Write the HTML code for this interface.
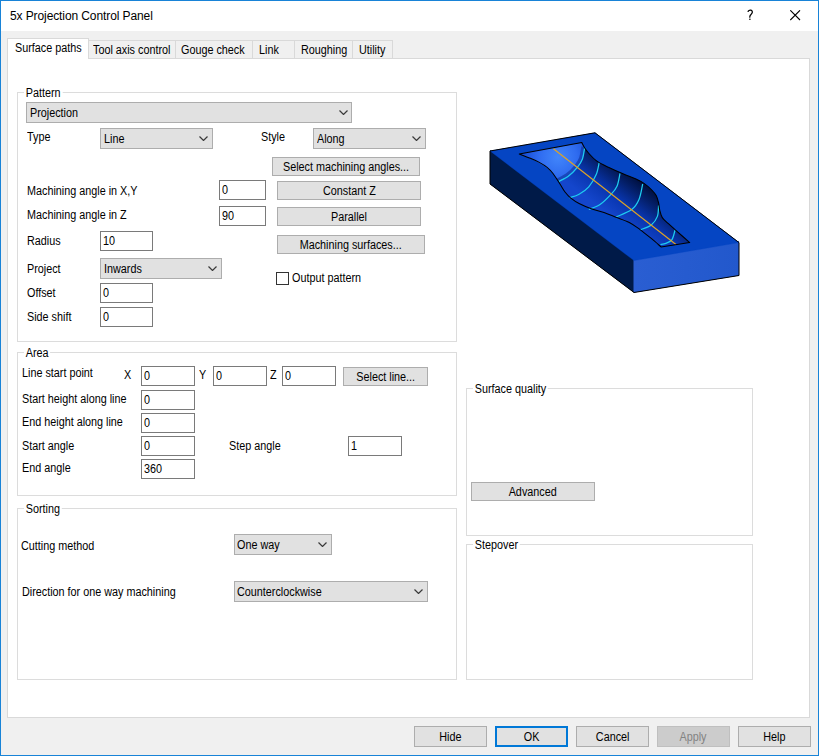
<!DOCTYPE html>
<html><head><meta charset="utf-8">
<style>
html,body{margin:0;padding:0;}
body{width:819px;height:756px;overflow:hidden;position:relative;background:#f0f0f0;font-family:"Liberation Sans",sans-serif;font-size:12px;color:#000;}
div,span{box-sizing:border-box;}
.a{position:absolute;}
.t{position:absolute;white-space:nowrap;line-height:13px;height:13px;transform:scaleX(0.9);transform-origin:0 0;}
.s{display:inline-block;transform:scaleX(0.9);}
.win{position:absolute;left:0;top:0;width:819px;height:756px;border:1px solid #1883d7;}
.title{position:absolute;left:1px;top:1px;width:817px;height:30px;background:#fff;}
.panel{position:absolute;left:7px;top:58px;width:803px;height:660px;background:#fff;border:1px solid #d9d9d9;}
.tab{position:absolute;top:40px;height:19px;background:#f0f0f0;border:1px solid #d9d9d9;border-right:none;}
.grp{position:absolute;border:1px solid #dcdcdc;}
.gl{position:absolute;background:#fff;white-space:nowrap;line-height:13px;height:13px;padding:0 2px 0 2px;transform:scaleX(0.9);transform-origin:0 0;}
.ed{position:absolute;background:#fff;border:1px solid #7a7a7a;}
.cb{position:absolute;background:#e1e1e1;border:1px solid #adadad;}
.bt{position:absolute;background:#e1e1e1;border:1px solid #adadad;text-align:center;white-space:nowrap;line-height:13px;}
.chev{position:absolute;width:9px;height:5px;}
</style></head><body>
<div class="win"></div>
<div class="title"></div>
<div class="t" style="left:10px;top:10px;font-size:12px;letter-spacing:-0.1px;transform:none;">5x Projection Control Panel</div>
<svg class="a" style="left:746px;top:9px" width="9" height="13"><path d="M2.1,2.4 C2.6,1.5 3.6,1.1 4.6,1.2 C5.8,1.4 6.5,2.3 6.3,3.4 C6.1,4.5 5.1,5.2 4.5,6 C4,6.6 3.8,7.2 3.8,8.2" fill="none" stroke="#000" stroke-width="1.25" stroke-linecap="round"/><circle cx="3.9" cy="10.3" r="0.8" fill="#000"/></svg>
<svg class="a" style="left:790px;top:10px" width="11" height="11"><path d="M0.3 0.3 L10 10 M10 0.3 L0.3 10" stroke="#000" stroke-width="1.1"/></svg>

<!-- tabs -->
<div class="tab" style="left:88px;width:88px;"></div>
<div class="tab" style="left:175px;width:78px;"></div>
<div class="tab" style="left:252px;width:43px;"></div>
<div class="tab" style="left:294px;width:59px;"></div>
<div class="tab" style="left:352px;width:41px;border-right:1px solid #d9d9d9;"></div>
<div class="panel"></div>
<div class="a" style="left:7px;top:38px;width:82px;height:21px;background:#fff;border:1px solid #d9d9d9;border-bottom:none;"></div>
<div class="t" style="left:15px;top:42px;">Surface paths</div>
<div class="t" style="left:93px;top:44px;">Tool axis control</div>
<div class="t" style="left:181px;top:44px;">Gouge check</div>
<div class="t" style="left:259px;top:44px;">Link</div>
<div class="t" style="left:301px;top:44px;">Roughing</div>
<div class="t" style="left:359px;top:44px;">Utility</div>

<!-- Pattern group -->
<div class="grp" style="left:17px;top:92px;width:440px;height:250px;"></div>
<div class="gl" style="left:24px;top:87px;">Pattern</div>
<div class="cb" style="left:26px;top:102px;width:326px;height:21px;"></div>
<div class="t" style="left:30px;top:107px;">Projection</div>
<svg class="chev" style="left:339px;top:110px"><path d="M0.5 0.5 L4.5 4.5 L8.5 0.5" fill="none" stroke="#3a3a3a" stroke-width="1.2"/></svg>
<div class="t" style="left:27px;top:131px;">Type</div>
<div class="cb" style="left:100px;top:128px;width:113px;height:21px;"></div>
<div class="t" style="left:104px;top:133px;">Line</div>
<svg class="chev" style="left:199px;top:136px"><path d="M0.5 0.5 L4.5 4.5 L8.5 0.5" fill="none" stroke="#3a3a3a" stroke-width="1.2"/></svg>
<div class="t" style="left:261px;top:131px;">Style</div>
<div class="cb" style="left:313px;top:128px;width:113px;height:21px;"></div>
<div class="t" style="left:317px;top:133px;">Along</div>
<svg class="chev" style="left:412px;top:136px"><path d="M0.5 0.5 L4.5 4.5 L8.5 0.5" fill="none" stroke="#3a3a3a" stroke-width="1.2"/></svg>
<div class="bt" style="left:272px;top:157px;width:148px;height:19px;padding-top:3px;"><span class="s">Select machining angles...</span></div>
<div class="t" style="left:27px;top:185px;">Machining angle in X,Y</div>
<div class="ed" style="left:219px;top:180px;width:47px;height:20px;"></div>
<div class="t" style="left:222px;top:184px;">0</div>
<div class="bt" style="left:277px;top:181px;width:144px;height:19px;padding-top:3px;"><span class="s">Constant Z</span></div>
<div class="t" style="left:27px;top:209px;">Machining angle in Z</div>
<div class="ed" style="left:219px;top:206px;width:47px;height:20px;"></div>
<div class="t" style="left:222px;top:210px;">90</div>
<div class="bt" style="left:277px;top:207px;width:144px;height:19px;padding-top:3px;"><span class="s">Parallel</span></div>
<div class="t" style="left:27px;top:235px;">Radius</div>
<div class="ed" style="left:100px;top:231px;width:53px;height:20px;"></div>
<div class="t" style="left:103px;top:235px;">10</div>
<div class="bt" style="left:277px;top:235px;width:148px;height:19px;padding-top:3px;"><span class="s">Machining surfaces...</span></div>
<div class="t" style="left:27px;top:263px;">Project</div>
<div class="cb" style="left:100px;top:258px;width:122px;height:21px;"></div>
<div class="t" style="left:104px;top:263px;">Inwards</div>
<svg class="chev" style="left:208px;top:266px"><path d="M0.5 0.5 L4.5 4.5 L8.5 0.5" fill="none" stroke="#3a3a3a" stroke-width="1.2"/></svg>
<div class="a" style="left:276px;top:272px;width:13px;height:13px;border:1px solid #333;background:#fff;"></div>
<div class="t" style="left:292px;top:272px;">Output pattern</div>
<div class="t" style="left:27px;top:287px;">Offset</div>
<div class="ed" style="left:100px;top:283px;width:53px;height:20px;"></div>
<div class="t" style="left:103px;top:287px;">0</div>
<div class="t" style="left:27px;top:311px;">Side shift</div>
<div class="ed" style="left:100px;top:307px;width:53px;height:20px;"></div>
<div class="t" style="left:103px;top:311px;">0</div>

<!-- Area group -->
<div class="grp" style="left:17px;top:352px;width:440px;height:144px;"></div>
<div class="gl" style="left:24px;top:347px;">Area</div>
<div class="t" style="left:22px;top:367px;">Line start point</div>
<div class="t" style="left:124px;top:369px;">X</div>
<div class="ed" style="left:141px;top:366px;width:54px;height:20px;"></div>
<div class="t" style="left:144px;top:370px;">0</div>
<div class="t" style="left:199px;top:369px;">Y</div>
<div class="ed" style="left:213px;top:366px;width:54px;height:20px;"></div>
<div class="t" style="left:216px;top:370px;">0</div>
<div class="t" style="left:270px;top:369px;">Z</div>
<div class="ed" style="left:282px;top:366px;width:54px;height:20px;"></div>
<div class="t" style="left:285px;top:370px;">0</div>
<div class="bt" style="left:343px;top:367px;width:85px;height:19px;padding-top:3px;"><span class="s">Select line...</span></div>
<div class="t" style="left:22px;top:393px;">Start height along line</div>
<div class="ed" style="left:141px;top:390px;width:54px;height:20px;"></div>
<div class="t" style="left:144px;top:394px;">0</div>
<div class="t" style="left:22px;top:416px;">End height along line</div>
<div class="ed" style="left:141px;top:413px;width:54px;height:20px;"></div>
<div class="t" style="left:144px;top:417px;">0</div>
<div class="t" style="left:22px;top:440px;">Start angle</div>
<div class="ed" style="left:141px;top:436px;width:54px;height:20px;"></div>
<div class="t" style="left:144px;top:440px;">0</div>
<div class="t" style="left:229px;top:440px;">Step angle</div>
<div class="ed" style="left:348px;top:436px;width:54px;height:20px;"></div>
<div class="t" style="left:351px;top:440px;">1</div>
<div class="t" style="left:22px;top:462px;">End angle</div>
<div class="ed" style="left:141px;top:459px;width:54px;height:20px;"></div>
<div class="t" style="left:144px;top:463px;">360</div>

<!-- Sorting group -->
<div class="grp" style="left:17px;top:508px;width:440px;height:172px;"></div>
<div class="gl" style="left:24px;top:503px;">Sorting</div>
<div class="t" style="left:21px;top:540px;">Cutting method</div>
<div class="cb" style="left:234px;top:534px;width:98px;height:21px;"></div>
<div class="t" style="left:237px;top:539px;">One way</div>
<svg class="chev" style="left:318px;top:542px"><path d="M0.5 0.5 L4.5 4.5 L8.5 0.5" fill="none" stroke="#3a3a3a" stroke-width="1.2"/></svg>
<div class="t" style="left:22px;top:586px;">Direction for one way machining</div>
<div class="cb" style="left:234px;top:581px;width:194px;height:21px;"></div>
<div class="t" style="left:237px;top:586px;">Counterclockwise</div>
<svg class="chev" style="left:414px;top:589px"><path d="M0.5 0.5 L4.5 4.5 L8.5 0.5" fill="none" stroke="#3a3a3a" stroke-width="1.2"/></svg>

<!-- Surface quality -->
<div class="grp" style="left:466px;top:388px;width:287px;height:148px;"></div>
<div class="gl" style="left:473px;top:383px;">Surface quality</div>
<div class="bt" style="left:471px;top:482px;width:124px;height:19px;padding-top:3px;"><span class="s">Advanced</span></div>
<div class="grp" style="left:466px;top:544px;width:287px;height:136px;"></div>
<div class="gl" style="left:473px;top:539px;">Stepover</div>

<!-- 3D model -->
<svg class="a" style="left:0;top:0" width="819" height="756">
<defs>
<linearGradient id="cg" gradientUnits="userSpaceOnUse" x1="604" y1="211" x2="632" y2="175">
<stop offset="0" stop-color="#1446cc"/><stop offset="0.4" stop-color="#0936b0"/><stop offset="0.75" stop-color="#04206c"/><stop offset="1" stop-color="#001040"/>
</linearGradient>
<radialGradient id="hg" gradientUnits="userSpaceOnUse" cx="558" cy="157" r="34">
<stop offset="0" stop-color="#4286fb"/><stop offset="0.55" stop-color="#2f6cf0"/><stop offset="0.85" stop-color="#1f58de"/><stop offset="1" stop-color="#1a4fd6"/>
</radialGradient>
<linearGradient id="fg" gradientUnits="userSpaceOnUse" x1="634" y1="0" x2="739" y2="0">
<stop offset="0" stop-color="#2a5ed2"/><stop offset="1" stop-color="#2258cc"/>
</linearGradient>
</defs>
<polygon points="490,151 595,132.8 739,242.6 739,275.5 634,292.5 490,184" fill="#001a48"/>
<polygon points="490,150 634,259.6 634,292.5 490,184" fill="#001a48"/>
<polygon points="633.5,259.1 739,241.1 739,275.5 634,292.5 633.5,292.5" fill="url(#fg)"/>
<polygon points="490,151 595,132.8 739,242.6 634,260.6" fill="#0545c3" stroke="#0545c3" stroke-width="0.3"/>
<path d="M581.8,142.5 C582.2,143.3 583.3,145.8 584.4,147.5 C585.5,149.2 586.5,150.8 588.5,153.0 C590.5,155.2 592.9,158.2 596.2,160.6 C599.5,163.0 603.9,165.1 608.4,167.3 C612.9,169.5 618.4,171.9 623.0,173.8 C627.6,175.8 632.5,177.4 636.0,179.0 C639.5,180.6 641.5,181.7 644.0,183.4 C646.5,185.2 649.3,187.5 651.3,189.5 C653.3,191.5 655.0,193.3 656.2,195.6 C657.4,197.8 658.0,200.6 658.6,203.0 C659.2,205.4 659.2,207.9 659.8,210.3 C660.4,212.7 660.9,215.4 662.3,217.6 C663.7,219.8 665.8,221.2 668.4,223.7 C671.0,226.1 674.5,229.2 678.1,232.3 C681.7,235.5 687.8,240.9 689.7,242.6 L661,246.9 C659.4,245.5 654.8,241.2 651.3,238.4 C647.8,235.6 644.0,232.5 640.3,229.8 C636.6,227.2 633.4,224.6 629.3,222.5 C625.2,220.4 620.0,218.8 615.9,217.2 C611.8,215.6 608.8,214.2 604.7,212.8 C600.6,211.4 595.6,210.4 591.3,208.8 C587.0,207.2 582.6,205.3 579.1,203.5 C575.6,201.7 572.9,199.7 570.5,197.8 C568.1,195.9 566.8,194.3 565.0,192.0 C563.2,189.7 562.0,187.1 560.0,184.0 C558.0,180.9 555.1,176.3 553.0,173.5 C550.9,170.7 549.4,169.2 547.1,167.3 C544.8,165.5 542.2,164.0 539.3,162.4 C536.4,160.8 532.8,159.4 529.5,158.0 C526.2,156.6 521.0,154.7 519.3,154.0 Z" fill="url(#cg)"/>
<path d="M584.7,147.7 C584.3,149.6 583.5,156.1 582.3,159.4 C581.1,162.7 579.7,164.5 577.4,167.3 C575.1,170.1 571.7,173.7 568.6,176.0 C565.5,178.3 560.4,180.5 558.8,181.4 L553,173.5 C547.1,167.3 539.3,162.4 529.5,158 L519.3,154 L581.8,142.5 Z" fill="url(#hg)"/>
<clipPath id="cc"><path d="M581.8,142.5 C582.2,143.3 583.3,145.8 584.4,147.5 C585.5,149.2 586.5,150.8 588.5,153.0 C590.5,155.2 592.9,158.2 596.2,160.6 C599.5,163.0 603.9,165.1 608.4,167.3 C612.9,169.5 618.4,171.9 623.0,173.8 C627.6,175.8 632.5,177.4 636.0,179.0 C639.5,180.6 641.5,181.7 644.0,183.4 C646.5,185.2 649.3,187.5 651.3,189.5 C653.3,191.5 655.0,193.3 656.2,195.6 C657.4,197.8 658.0,200.6 658.6,203.0 C659.2,205.4 659.2,207.9 659.8,210.3 C660.4,212.7 660.9,215.4 662.3,217.6 C663.7,219.8 665.8,221.2 668.4,223.7 C671.0,226.1 674.5,229.2 678.1,232.3 C681.7,235.5 687.8,240.9 689.7,242.6 L661,246.9 C659.4,245.5 654.8,241.2 651.3,238.4 C647.8,235.6 644.0,232.5 640.3,229.8 C636.6,227.2 633.4,224.6 629.3,222.5 C625.2,220.4 620.0,218.8 615.9,217.2 C611.8,215.6 608.8,214.2 604.7,212.8 C600.6,211.4 595.6,210.4 591.3,208.8 C587.0,207.2 582.6,205.3 579.1,203.5 C575.6,201.7 572.9,199.7 570.5,197.8 C568.1,195.9 566.8,194.3 565.0,192.0 C563.2,189.7 562.0,187.1 560.0,184.0 C558.0,180.9 555.1,176.3 553.0,173.5 C550.9,170.7 549.4,169.2 547.1,167.3 C544.8,165.5 542.2,164.0 539.3,162.4 C536.4,160.8 532.8,159.4 529.5,158.0 C526.2,156.6 521.0,154.7 519.3,154.0 Z"/></clipPath>
<path d="M584.7,147.7 C584.3,149.6 583.5,156.1 582.3,159.4 C581.1,162.7 579.7,164.5 577.4,167.3 C575.1,170.1 571.7,173.7 568.6,176.0 C565.5,178.3 560.4,180.5 558.8,181.4" fill="none" stroke="#0a2c90" stroke-width="3" transform="translate(-1.8,-1.2)" opacity="0.55" clip-path="url(#cc)"/>
<path d="M584.7,147.7 C584.3,149.6 583.5,156.1 582.3,159.4 C581.1,162.7 579.7,164.5 577.4,167.3 C575.1,170.1 571.7,173.7 568.6,176.0 C565.5,178.3 560.4,180.5 558.8,181.4" fill="none" stroke="#1ecdf0" stroke-width="1.25"/>
<path d="M599.2,162.4 C598.7,164.4 597.9,170.5 596.2,174.6 C594.5,178.7 591.6,183.5 588.8,186.8 C585.9,190.1 582.3,192.4 579.1,194.2 C575.9,196.0 571.1,197.2 569.5,197.8" fill="none" stroke="#1ecdf0" stroke-width="1.25"/>
<path d="M620.0,173.4 C619.5,175.5 618.6,182.4 617.1,185.9 C615.6,189.4 613.9,191.3 611.0,194.4 C608.1,197.5 603.7,202.1 600.0,204.6 C596.3,207.1 590.7,208.6 588.8,209.4" fill="none" stroke="#1ecdf0" stroke-width="1.25"/>
<path d="M642.7,184.0 C642.1,186.6 640.9,195.0 639.1,199.3 C637.3,203.6 635.6,206.6 631.7,209.6 C627.8,212.6 618.5,215.8 615.9,217.1" fill="none" stroke="#1ecdf0" stroke-width="1.25"/>
<path d="M658.6,205.4 C658.4,207.2 658.6,213.2 657.4,216.4 C656.2,219.7 654.1,222.7 651.3,224.9 C648.4,227.1 642.1,229.0 640.3,229.8" fill="none" stroke="#1ecdf0" stroke-width="1.25"/>
<path d="M675.1,229.8 C674.6,231.4 673.5,237.3 672.0,239.6 C670.5,241.8 667.8,242.5 665.9,243.3 C664.0,244.1 661.3,244.3 660.4,244.5" fill="none" stroke="#1ecdf0" stroke-width="1.25"/>
<line x1="553.4" y1="148.7" x2="676.3" y2="244.7" stroke="#e0a424" stroke-width="1.1"/>
<path d="M581.8,142.5 C582.2,143.3 583.3,145.8 584.4,147.5 C585.5,149.2 586.5,150.8 588.5,153.0 C590.5,155.2 592.9,158.2 596.2,160.6 C599.5,163.0 603.9,165.1 608.4,167.3 C612.9,169.5 618.4,171.9 623.0,173.8 C627.6,175.8 632.5,177.4 636.0,179.0 C639.5,180.6 641.5,181.7 644.0,183.4 C646.5,185.2 649.3,187.5 651.3,189.5 C653.3,191.5 655.0,193.3 656.2,195.6 C657.4,197.8 658.0,200.6 658.6,203.0 C659.2,205.4 659.2,207.9 659.8,210.3 C660.4,212.7 660.9,215.4 662.3,217.6 C663.7,219.8 665.8,221.2 668.4,223.7 C671.0,226.1 674.5,229.2 678.1,232.3 C681.7,235.5 687.8,240.9 689.7,242.6 L661,246.9 C659.4,245.5 654.8,241.2 651.3,238.4 C647.8,235.6 644.0,232.5 640.3,229.8 C636.6,227.2 633.4,224.6 629.3,222.5 C625.2,220.4 620.0,218.8 615.9,217.2 C611.8,215.6 608.8,214.2 604.7,212.8 C600.6,211.4 595.6,210.4 591.3,208.8 C587.0,207.2 582.6,205.3 579.1,203.5 C575.6,201.7 572.9,199.7 570.5,197.8 C568.1,195.9 566.8,194.3 565.0,192.0 C563.2,189.7 562.0,187.1 560.0,184.0 C558.0,180.9 555.1,176.3 553.0,173.5 C550.9,170.7 549.4,169.2 547.1,167.3 C544.8,165.5 542.2,164.0 539.3,162.4 C536.4,160.8 532.8,159.4 529.5,158.0 C526.2,156.6 521.0,154.7 519.3,154.0 Z" fill="none" stroke="#000" stroke-width="1.05" stroke-linejoin="round"/>
<polygon points="490,151 595,132.8 739,242.6 739,275.5 634,292.5 490,184" fill="none" stroke="#000" stroke-width="1" stroke-linejoin="round"/>
</svg>

<!-- bottom buttons -->
<div class="bt" style="left:414px;top:726px;width:73px;height:21px;padding-top:4px;"><span class="s">Hide</span></div>
<div class="bt" style="left:495px;top:726px;width:73px;height:21px;padding-top:3px;border:2px solid #0078d7;"><span class="s">OK</span></div>
<div class="bt" style="left:576px;top:726px;width:73px;height:21px;padding-top:4px;"><span class="s">Cancel</span></div>
<div class="bt" style="left:657px;top:726px;width:73px;height:21px;padding-top:4px;background:#ccc;border-color:#bfbfbf;color:#838383;"><span class="s">Apply</span></div>
<div class="bt" style="left:738px;top:726px;width:73px;height:21px;padding-top:4px;"><span class="s">Help</span></div>
</body></html>
